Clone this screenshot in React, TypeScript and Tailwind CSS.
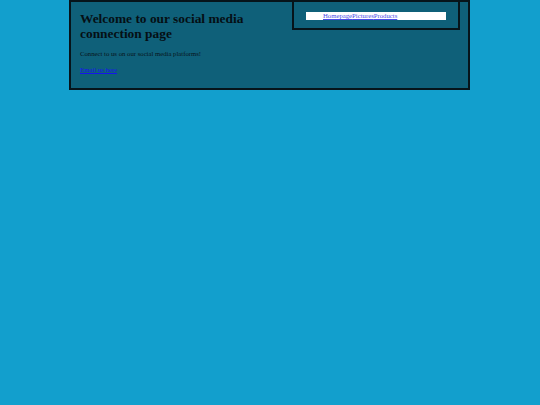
import React from 'react';

const navLinks = ['Homepage', 'Pictures', 'Products'];

export default function App() {
  return (
    <div className="min-h-[405px] w-full bg-[#129fcd] font-['Liberation_Serif','Times_New_Roman',serif] text-black">
      {/* Header panel */}
      <div className="ml-[69px] w-[401px] border-2 border-[#06141a] bg-[#0f6079] pl-[9px] pr-[8px] pb-[14.7px]">
        <div className="flex items-start">
          <div className="w-[212px]">
            <h1 className="mt-[8.6px] text-[13.4px] font-bold leading-[15.4px] text-[#050f14]">
              Welcome to our social media connection page
            </h1>
            <p className="mt-[8.6px] text-[6.72px] leading-[7.7px] text-[#07141a]">
              Connect to us on our social media platforms!
            </p>
            <a href="#" className="mt-[7.9px] block w-fit text-[6.72px] leading-[7.7px] text-[#1515ee] underline">
              Email us here
            </a>
          </div>

          {/* Nav box */}
          <nav className="-mt-[2px] h-[30px] w-[168px] border-2 border-[#06141a] px-[12px] pt-[10px]">
            <ul className="flex h-[8px] bg-white pl-[17px] text-[6.72px] leading-[8px]">
              {navLinks.map((l) => (
                <li key={l}>
                  <a href="#" className="text-[#4a4ae6] underline">
                    {l}
                  </a>
                </li>
              ))}
            </ul>
          </nav>
        </div>
      </div>
    </div>
  );
}
